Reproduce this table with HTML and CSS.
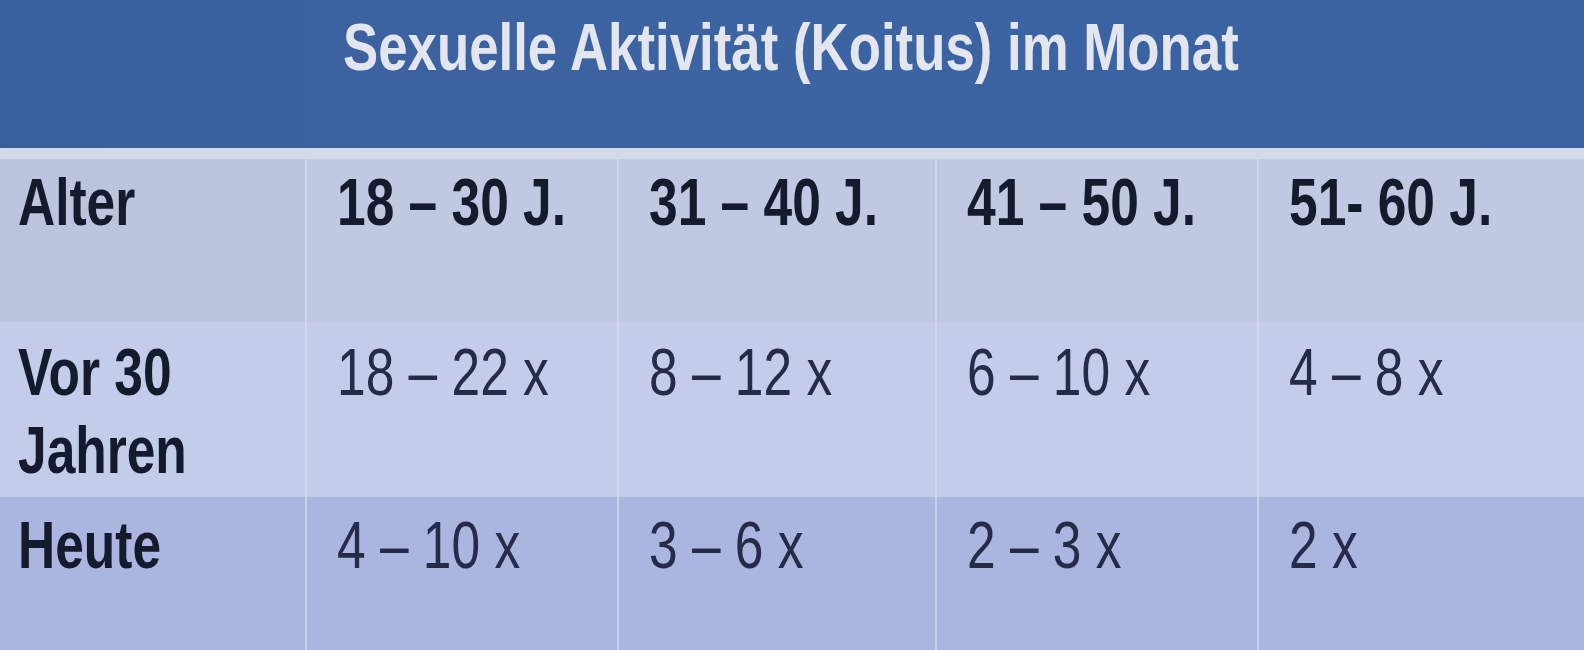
FILE: index.html
```html
<!DOCTYPE html>
<html lang="de">
<head>
<meta charset="utf-8">
<title>Sexuelle Aktivität (Koitus) im Monat</title>
<link rel="stylesheet" href="styles.css">
</head>
<body>
<div class="slide">
  <header class="title-band">
    <h1 class="title"><span class="narrow">Sexuelle Aktivität (Koitus) im Monat</span></h1>
  </header>
  <div class="strip"></div>
  <div class="table">
    <div class="cell head first r1"><span class="narrow">Alter</span></div>
    <div class="cell head r1"><span class="narrow">18 – 30 J.</span></div>
    <div class="cell head r1"><span class="narrow">31 – 40 J.</span></div>
    <div class="cell head r1"><span class="narrow">41 – 50 J.</span></div>
    <div class="cell head r1"><span class="narrow">51- 60 J.</span></div>

    <div class="cell head first r2"><span class="narrow">Vor 30<br>Jahren</span></div>
    <div class="cell r2"><span class="narrow">18 – 22 x</span></div>
    <div class="cell r2"><span class="narrow">8 – 12 x</span></div>
    <div class="cell r2"><span class="narrow">6 – 10 x</span></div>
    <div class="cell r2"><span class="narrow">4 – 8 x</span></div>

    <div class="cell head first r3"><span class="narrow">Heute</span></div>
    <div class="cell r3"><span class="narrow">4 – 10 x</span></div>
    <div class="cell r3"><span class="narrow">3 – 6 x</span></div>
    <div class="cell r3"><span class="narrow">2 – 3 x</span></div>
    <div class="cell r3"><span class="narrow">2 x</span></div>
  </div>
</div>
</body>
</html>
```

FILE: styles.css
```css
html, body {
  margin: 0;
  padding: 0;
  background: #a9b5df;
}

.slide {
  width: 1584px;
  height: 650px;
  overflow: hidden;
  display: flex;
  flex-direction: column;
  font-family: "Liberation Sans", Arial, sans-serif;
}

.narrow {
  display: inline-block;
  transform: scaleX(0.78);
  transform-origin: 0 50%;
}

.title-band {
  height: 148px;
  flex: none;
  background: linear-gradient(90deg, #3a5f9d 0%, #3d64a2 50%, #3a62a0 100%);
  box-sizing: border-box;
  padding: 15px 0 0 0;
}

.title {
  margin: 0;
  font-size: 66px;
  line-height: 64px;
  font-weight: 700;
  color: #e3e6ee;
  text-align: center;
}

.title .narrow {
  transform: scaleX(0.8);
  transform-origin: 50% 50%;
  margin-right: 2px;
}

.strip {
  height: 11px;
  flex: none;
  background: #d4dae9;
}

.table {
  flex: 1;
  display: grid;
  grid-template-columns: 305px 312px 318px 322px 1fr;
  grid-template-rows: 163px 175px 1fr;
}

.cell {
  box-sizing: border-box;
  padding: 9px 0 0 30px;
  font-size: 66px;
  line-height: 78px;
  color: #262c48;
  font-weight: 400;
  border-left: 2px solid rgba(222, 227, 240, 0.55);
  white-space: nowrap;
}

.cell.first {
  border-left: none;
  padding-left: 18px;
}

.cell.head {
  font-weight: 700;
  color: #151a2c;
}

.r1 {
  padding-top: 4px;
  background: #c1c8e1;
}

.r1.first {
  background: #bcc4de;
}

.r2 {
  padding-top: 11px;
  background: #c3cdea;
}

.r3 {
  padding-top: 9px;
  background: #aab6e0;
}
```
